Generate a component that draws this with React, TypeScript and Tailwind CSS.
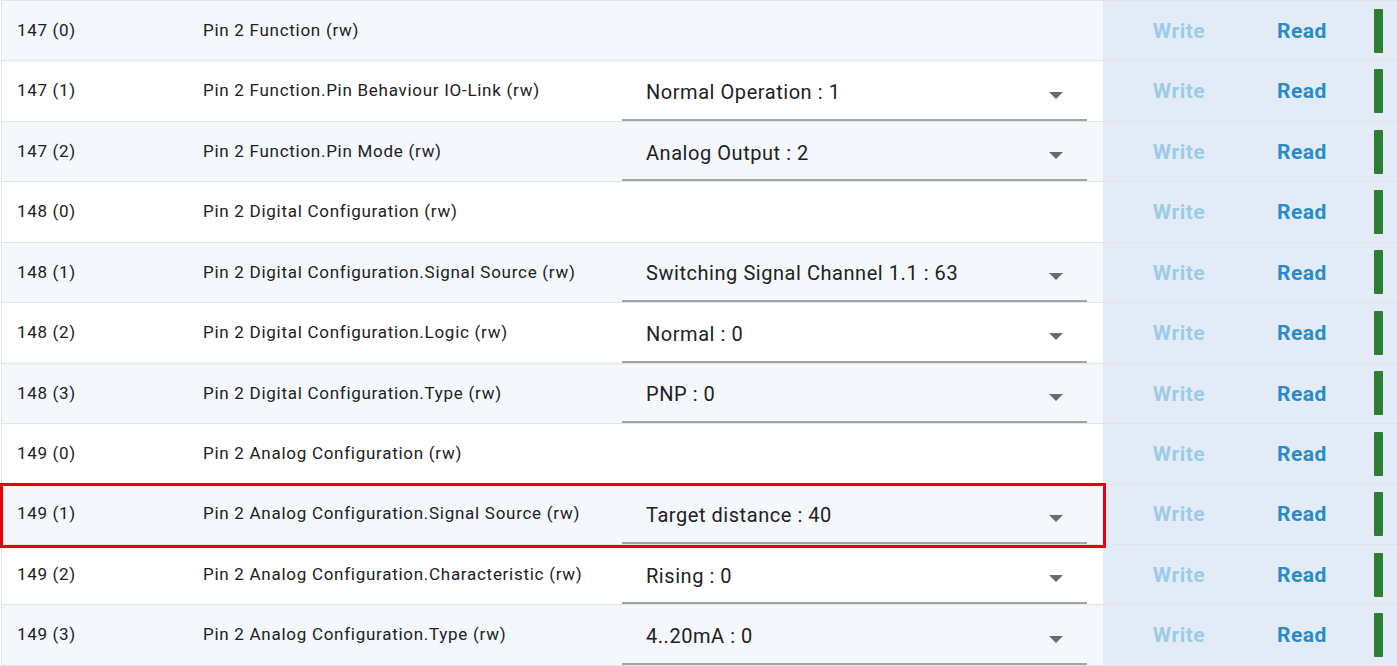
import React from "react";

// Parameter rows: index, name, optional select value
const rows = [
  { idx: "147 (0)", name: "Pin 2 Function (rw)" },
  { idx: "147 (1)", name: "Pin 2 Function.Pin Behaviour IO-Link (rw)", value: "Normal Operation : 1" },
  { idx: "147 (2)", name: "Pin 2 Function.Pin Mode (rw)", value: "Analog Output : 2" },
  { idx: "148 (0)", name: "Pin 2 Digital Configuration (rw)" },
  { idx: "148 (1)", name: "Pin 2 Digital Configuration.Signal Source (rw)", value: "Switching Signal Channel 1.1 : 63" },
  { idx: "148 (2)", name: "Pin 2 Digital Configuration.Logic (rw)", value: "Normal : 0" },
  { idx: "148 (3)", name: "Pin 2 Digital Configuration.Type (rw)", value: "PNP : 0" },
  { idx: "149 (0)", name: "Pin 2 Analog Configuration (rw)" },
  { idx: "149 (1)", name: "Pin 2 Analog Configuration.Signal Source (rw)", value: "Target distance : 40", selected: true },
  { idx: "149 (2)", name: "Pin 2 Analog Configuration.Characteristic (rw)", value: "Rising : 0" },
  { idx: "149 (3)", name: "Pin 2 Analog Configuration.Type (rw)", value: "4..20mA : 0" },
];

const App = () => {
  return (
    <div
      className="w-[1397px] h-[666px] overflow-hidden bg-white text-[#212121]"
      style={{ fontFamily: "Roboto, 'Liberation Sans', sans-serif" }}
    >
      <div className="border-l border-t border-[#e1e5ea] ml-[1px]">
        {rows.map((row, index) => (
          <div
            key={index}
            className={`relative flex h-[60.45px] border-b border-[#e1e5ea] ${
              index % 2 == 0 ? "bg-[#f4f7fb]" : "bg-white"
            }`}
          >
            <div className="w-[185px] shrink-0 pl-[15px] flex items-center text-[17px] tracking-[0.65px]">
              {row.idx}
            </div>
            <div className="w-[435px] shrink-0 pl-[16px] flex items-center text-[17px] tracking-[0.72px]">
              {row.name}
            </div>
            <div className="w-[465px] shrink-0 relative">
              {row.value && (
                <div className="absolute left-0 right-0 top-[4px] bottom-[0px] flex items-center pl-[24px] pr-[24px] border-b-2 border-[#a3a3a3]">
                  <span className="flex-1 text-[20px] tracking-[0.55px]">{row.value}</span>
                  <svg width="14" height="8" viewBox="0 0 14 8" className="mt-[7px]">
                    <path d="M0 0 L14 0 L7 7 Z" fill="#6b6b6b" />
                  </svg>
                </div>
              )}
            </div>
            <div className="w-[16px] shrink-0" />
            <div className="flex-1 flex items-center bg-[#e3ecf6]">
              <div className="w-[152px] flex justify-center pt-[2px] text-[21px] font-bold tracking-[0.5px] text-[#9ccbe8]">
                Write
              </div>
              <div className="w-[94px] flex justify-center pt-[2px] text-[21px] font-bold tracking-[0.5px] text-[#2a8bc8]">
                Read
              </div>
              <div className="ml-[25px] w-[9px] h-[44px] bg-[#2e7d32] rounded-[1px]" />
            </div>
            {row.selected && (
              <div className="absolute z-10 left-[-2px] top-[-2px] w-[1106px] h-[65px] border-[3px] border-[#e8000b] pointer-events-none" />
            )}
          </div>
        ))}
      </div>
    </div>
  );
};

export default App;
